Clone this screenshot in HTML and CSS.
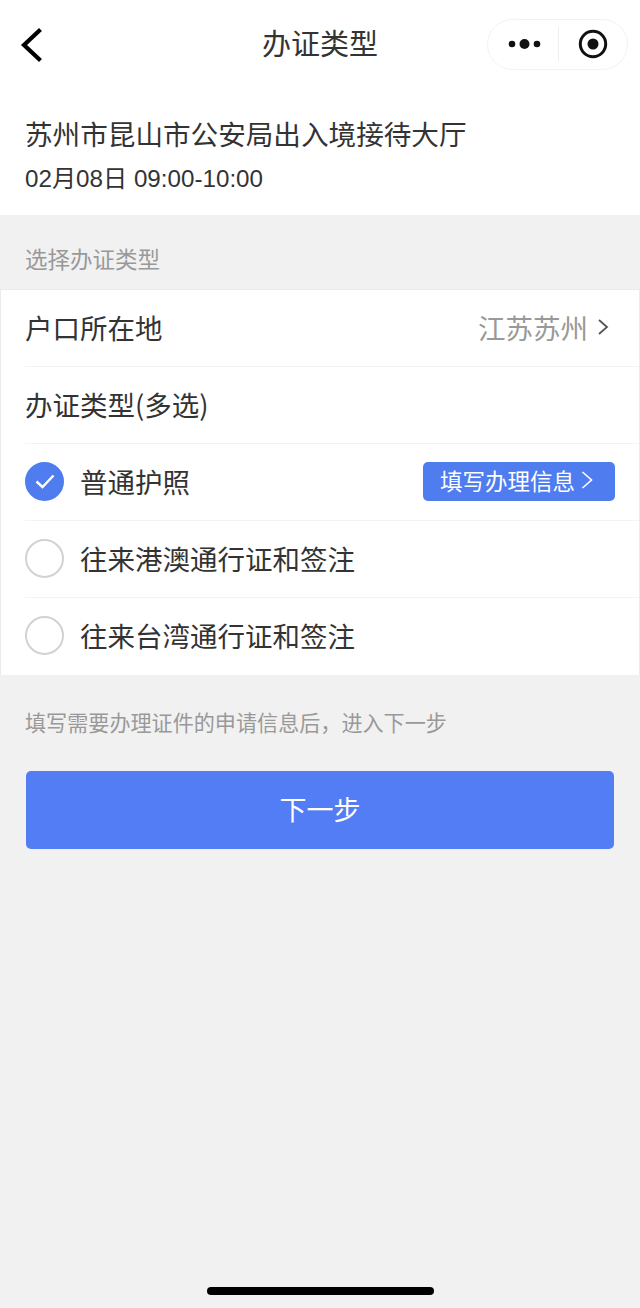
FILE: index.html
```html
<!DOCTYPE html>
<html lang="zh-CN">
<head>
<meta charset="utf-8">
<title>办证类型</title>
<link rel="stylesheet" href="styles.css">
</head>
<body>
<div class="page">
  <header class="top">
    <nav class="nav">
      <svg class="back" width="24" height="36" viewBox="0 0 24 36"><path d="M21.500 2.500 L5 18 L21.500 33.500" fill="none" stroke="#000" stroke-width="4.200"/></svg>
      <h1 class="nav-title">办证类型</h1>
      <div class="capsule">
        <svg width="33" height="12" viewBox="0 0 33 12"><circle cx="4" cy="6" r="3.300" fill="#111"/><circle cx="16.500" cy="6" r="5" fill="#111"/><circle cx="29" cy="6" r="3.300" fill="#111"/></svg>
        <span class="capsule-line"></span>
        <svg width="30" height="30" viewBox="0 0 30 30"><circle cx="15" cy="15" r="12.700" fill="none" stroke="#111" stroke-width="3"/><circle cx="15" cy="15" r="5.500" fill="#111"/></svg>
      </div>
    </nav>
    <div class="place">
      <div class="place-name">苏州市昆山市公安局出入境接待大厅</div>
      <div class="place-time">02月08日 09:00-10:00</div>
    </div>
  </header>
  <div class="section-label">选择办证类型</div>
  <section class="list">
    <div class="row row-first">
      <span class="row-text">户口所在地</span>
      <span class="row-value">江苏苏州<svg class="chev" width="12" height="18" viewBox="0 0 12 18"><path d="M2 2 L10 9 L2 16" fill="none" stroke="#555" stroke-width="1.800"/></svg></span>
    </div>
    <div class="row"><span class="row-text">办证类型(多选)</span></div>
    <div class="row">
      <span class="check check-on"><svg width="24" height="20" viewBox="0 0 24 20"><path d="M3.500 10.500 L9.500 16 L20.500 4.500" fill="none" stroke="#fff" stroke-width="2.400"/></svg></span>
      <span class="row-text">普通护照</span>
      <span class="tag">填写办理信息<svg class="tag-chev" width="14" height="20" viewBox="0 0 14 20"><path d="M2.500 2 L11.500 10 L2.500 18" fill="none" stroke="#fff" stroke-width="1.600"/></svg></span>
    </div>
    <div class="row"><span class="check"></span><span class="row-text">往来港澳通行证和签注</span></div>
    <div class="row"><span class="check"></span><span class="row-text">往来台湾通行证和签注</span></div>
  </section>
  <p class="note">填写需要办理证件的申请信息后，进入下一步</p>
  <button class="next">下一步</button>
  <div class="spacer"></div>
  <div class="home-bar"></div>
</div>
</body>
</html>
```
FILE: styles.css
```css
* { box-sizing: border-box; }
html, body { margin: 0; padding: 0; }
body {
  background: #f1f1f1;
  font-family: "Noto Sans CJK SC", "Liberation Sans", sans-serif;
  color: #333;
}
.page { width: 640px; height: 1308px; display: flex; flex-direction: column; overflow: hidden; }
.top { background: #fff; height: 215px; }
.nav { height: 88px; position: relative; display: flex; align-items: center; justify-content: center; }
.back { position: absolute; left: 19px; top: 27px; }
.nav-title { margin: 0 0 3px; font-size: 29px; font-weight: 400; line-height: 85px; color: #333; }
.capsule {
  position: absolute; left: 487px; top: 19px; width: 141px; height: 51px;
  border: 1px solid #f3f3f3; border-radius: 26px;
  display: flex; align-items: center; padding: 0 0 1px 20px;
}
.capsule-line { width: 1px; height: 34px; background: #eee; margin: 0 19px 0 17px; }
.place { padding: 26px 25px 0; }
.place-name { font-size: 27.600px; line-height: 38px; color: #333; }
.place-time { font-size: 24.200px; line-height: 34px; margin-top: 10px; color: #333; font-family: "Liberation Sans", "Noto Sans CJK SC", sans-serif; }
.section-label { height: 74px; padding: 27px 25px 0; font-size: 22.500px; line-height: 32px; color: #999; }
.list { background: #fff; height: 386px; border: 1px solid #ebebeb; border-width: 1px 1px 0; display: flex; flex-direction: column; }
.row {
  height: 77px; margin-left: 24px; display: flex; align-items: center;
  border-top: 1px solid #f3f3f3; font-size: 27.500px; color: #333; flex: none;
}
.row-first { border-top: 0; height: 76px; }
.row-text { line-height: 40px; padding-bottom: 2px; }
.row-value { margin-left: auto; margin-right: 30px; padding-bottom: 2px; color: #999; display: flex; align-items: center; }
.chev { margin-left: 9px; }
.check { width: 39px; height: 39px; border-radius: 50%; border: 2px solid #d2d2d2; margin: 0 16px 2px 0; flex: none; background: #fff; display: flex; align-items: center; justify-content: center; }
.check-on { background: #4f7cef; border-color: #4f7cef; }
.tag {
  margin: 0 24px 2px auto; width: 192px; height: 39px; border-radius: 5px; padding-bottom: 2px;
  background: #4f7cef; color: #fff; font-size: 22.500px; display: flex; align-items: center; padding-left: 17px;
}
.tag-chev { margin-left: 5px; }
.note { margin: 0; padding: 31px 25px 0; height: 96px; font-size: 21.100px; line-height: 32px; color: #999; }
.next {
  display: block; flex: none; width: 588px; height: 78px; margin: 0 0 0 26px; border: 0; border-radius: 5px; padding: 0 0 4px;
  background: #527df5; color: #fff; font-family: inherit; font-size: 27px;
}
.spacer { flex: 1; }
.home-bar { width: 227px; height: 8px; border-radius: 4px; background: #000; margin: 0 0 13px 207px; flex: none; }
```
